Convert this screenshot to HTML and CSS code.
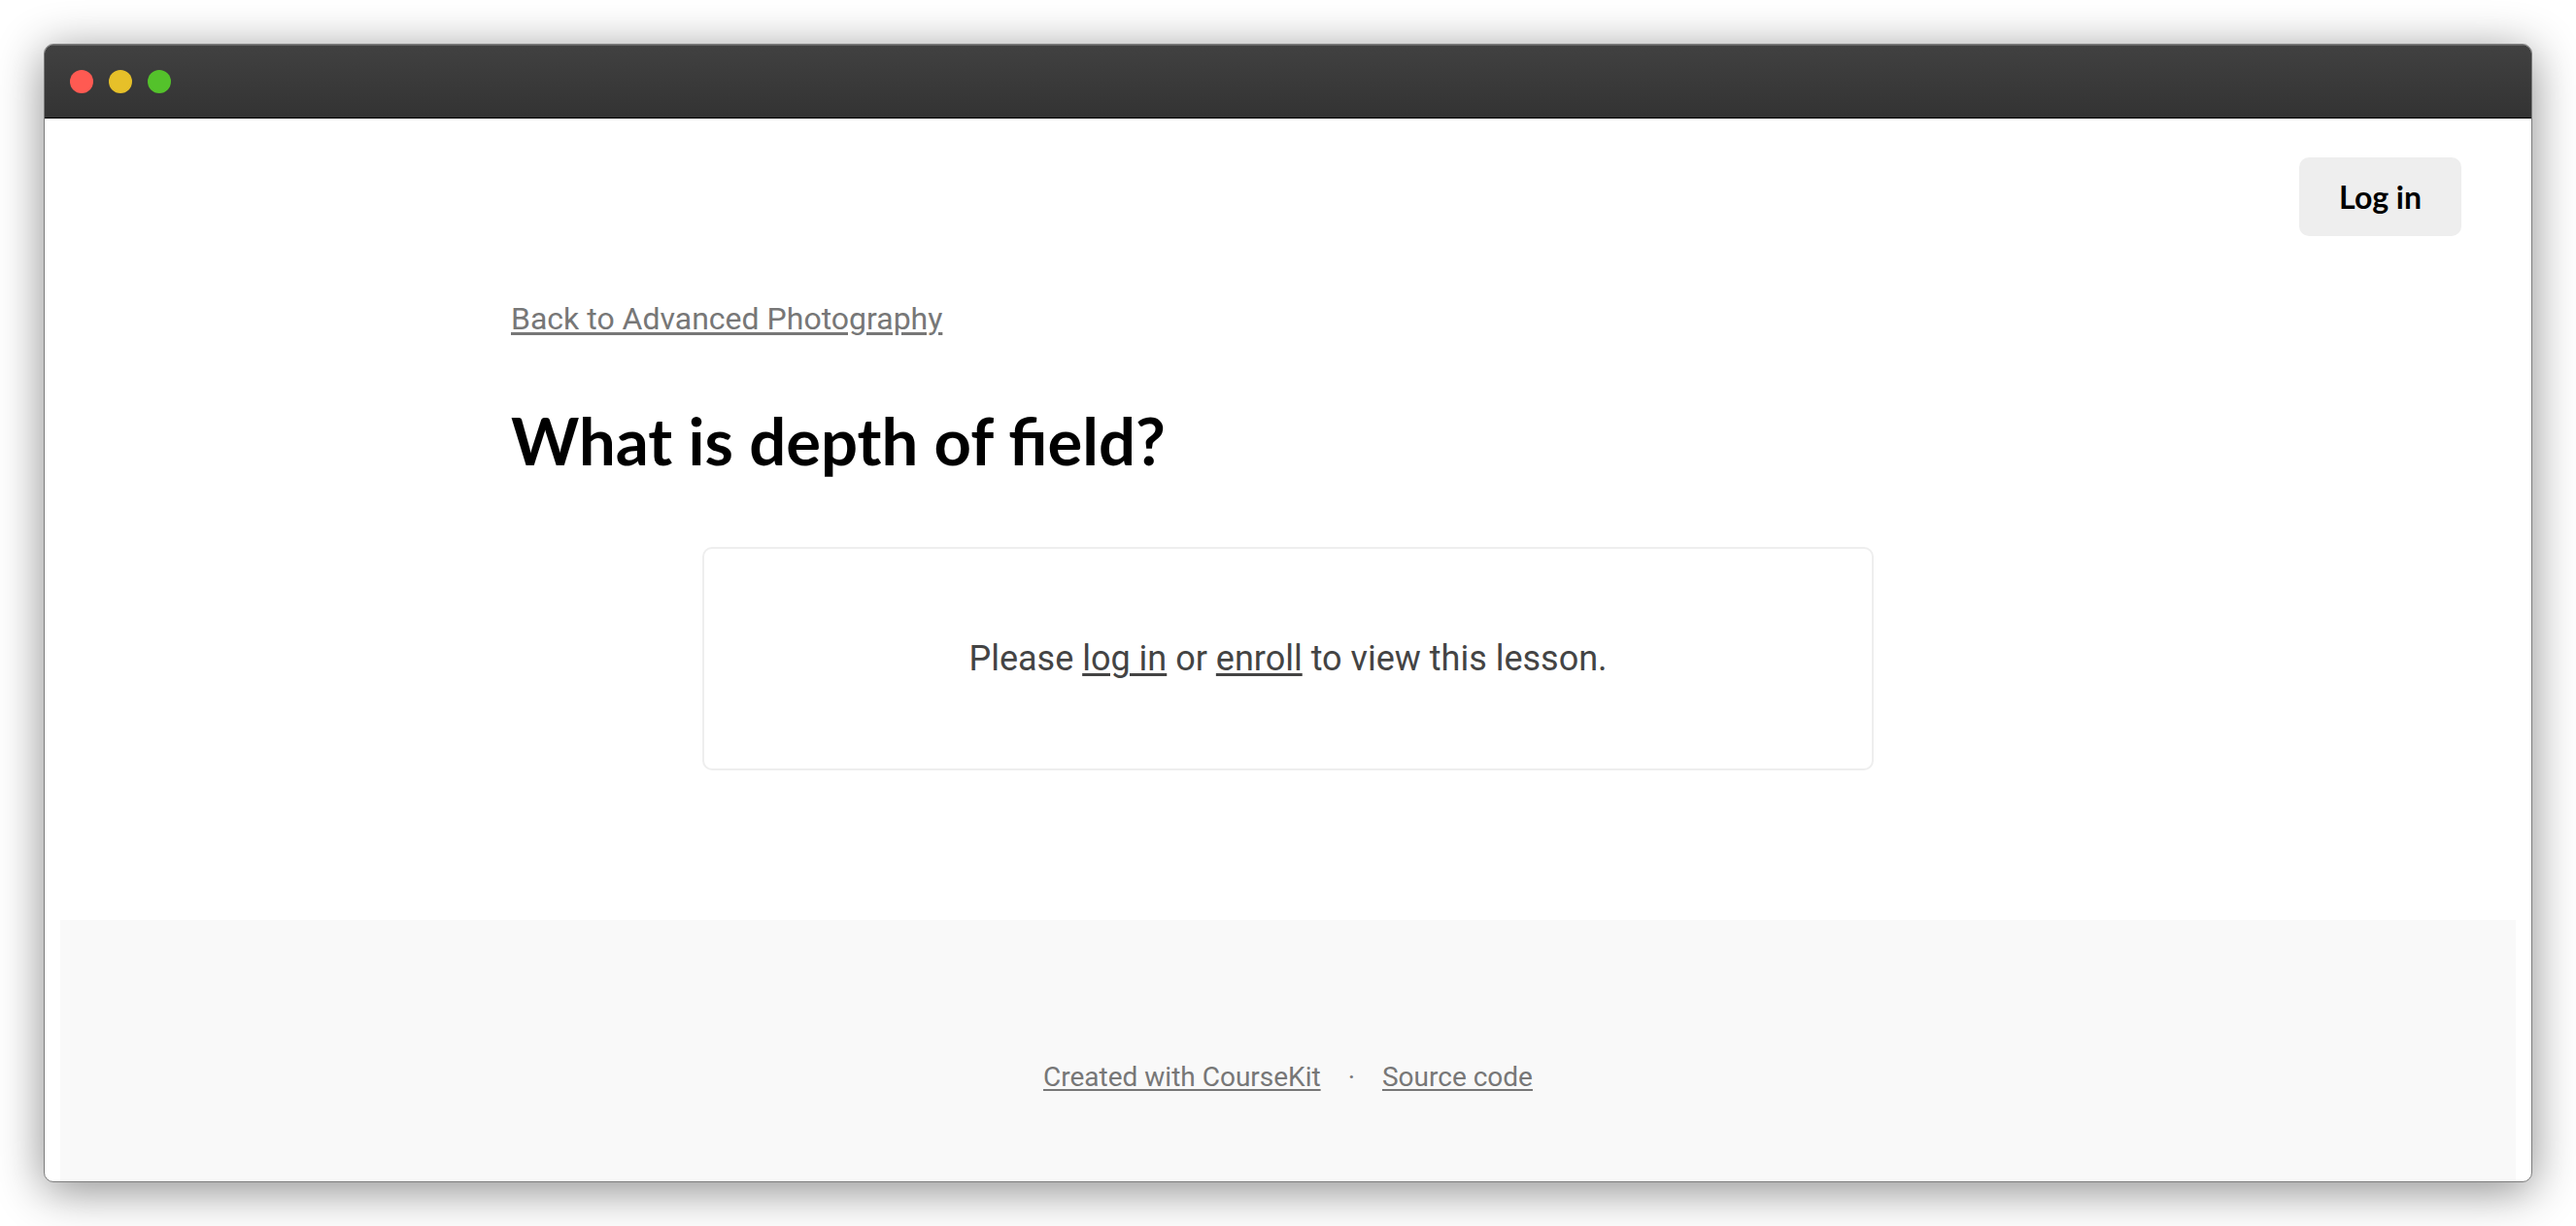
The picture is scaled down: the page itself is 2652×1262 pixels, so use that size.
FILE: index.html
```html
<!DOCTYPE html>
<html lang="en">
<head>
<meta charset="utf-8">
<meta name="viewport" content="width=device-width, initial-scale=1">
<title>What is depth of field?</title>
<link rel="stylesheet" href="styles.css">
</head>
<body>
<div class="window">
  <div class="titlebar">
    <span class="light light-close"></span>
    <span class="light light-minimize"></span>
    <span class="light light-zoom"></span>
  </div>
  <div class="page">
    <header class="header">
      <button class="login" type="button">Log in</button>
    </header>
    <main class="lesson">
      <a class="back" href="#">Back to Advanced Photography</a>
      <h1 class="title">What is depth of field?</h1>
      <p class="notice">Please <a href="#">log in</a> or <a href="#">enroll</a> to view this lesson.</p>
    </main>
    <footer class="footer">
      <a href="#">Created with CourseKit</a>
      <span>·</span>
      <a href="#">Source code</a>
    </footer>
  </div>
</div>
</body>
</html>
```
FILE: styles.css
```css
* {
  box-sizing: border-box;
}

body {
  margin: 0;
  padding: 45px;
  min-height: 100vh;
  display: flex;
  background: #fff;
  color: #444;
  font-family: Roboto, sans-serif;
}

a {
  color: inherit;
  text-decoration-thickness: 3px;
  text-underline-offset: 3px;
}

.window {
  flex: 1;
  display: flex;
  flex-direction: column;
  overflow: hidden;
  border: 1px solid #7c7c7c;
  border-radius: 10px;
  background: #fff;
  box-shadow: 0 8px 48px rgba(0, 0, 0, 0.46);
}

.titlebar {
  display: flex;
  align-items: center;
  gap: 16px;
  height: 76px;
  padding: 0 26px;
  border-bottom: 1px solid #000;
  background: linear-gradient(#414141, #333);
  box-shadow: inset 0 1px #666;
}

.light {
  width: 24px;
  height: 24px;
  border-radius: 50%;
}

.light-close {
  background: #ff5a52;
}

.light-minimize {
  background: #e6c029;
}

.light-zoom {
  background: #54c22b;
}

.page {
  flex: 1;
  display: flex;
  flex-direction: column;
  padding: 0 16px;
}

.header {
  display: flex;
  justify-content: flex-end;
  padding: 40px 56px;
}

.login {
  padding: 20px 41px;
  border: 0;
  border-radius: 10px;
  background: #eee;
  color: #000;
  font: 700 32px/41px Lato, sans-serif;
}

.lesson {
  width: 100%;
  max-width: 1600px;
  margin: 0 auto;
  padding: 20px 0 154px;
}

.back {
  display: block;
  width: fit-content;
  color: #777;
  font-size: 32px;
  line-height: 50px;
}

.title {
  margin: 56px 0 66px;
  color: #000;
  font: 700 67px/88px Lato, sans-serif;
}

.notice {
  max-width: 1206px;
  margin: 0 auto;
  padding: 84px 40px;
  border: 2px solid #eee;
  border-radius: 10px;
  font-size: 36px;
  line-height: 58px;
  text-align: center;
}

.footer {
  flex: 1;
  display: flex;
  justify-content: center;
  gap: 28px;
  padding: 140px 40px 80px;
  background: #f9f9f9;
  color: #777;
  font-size: 28px;
  line-height: 44px;
}

.footer a {
  text-decoration-thickness: 2px;
}
```
